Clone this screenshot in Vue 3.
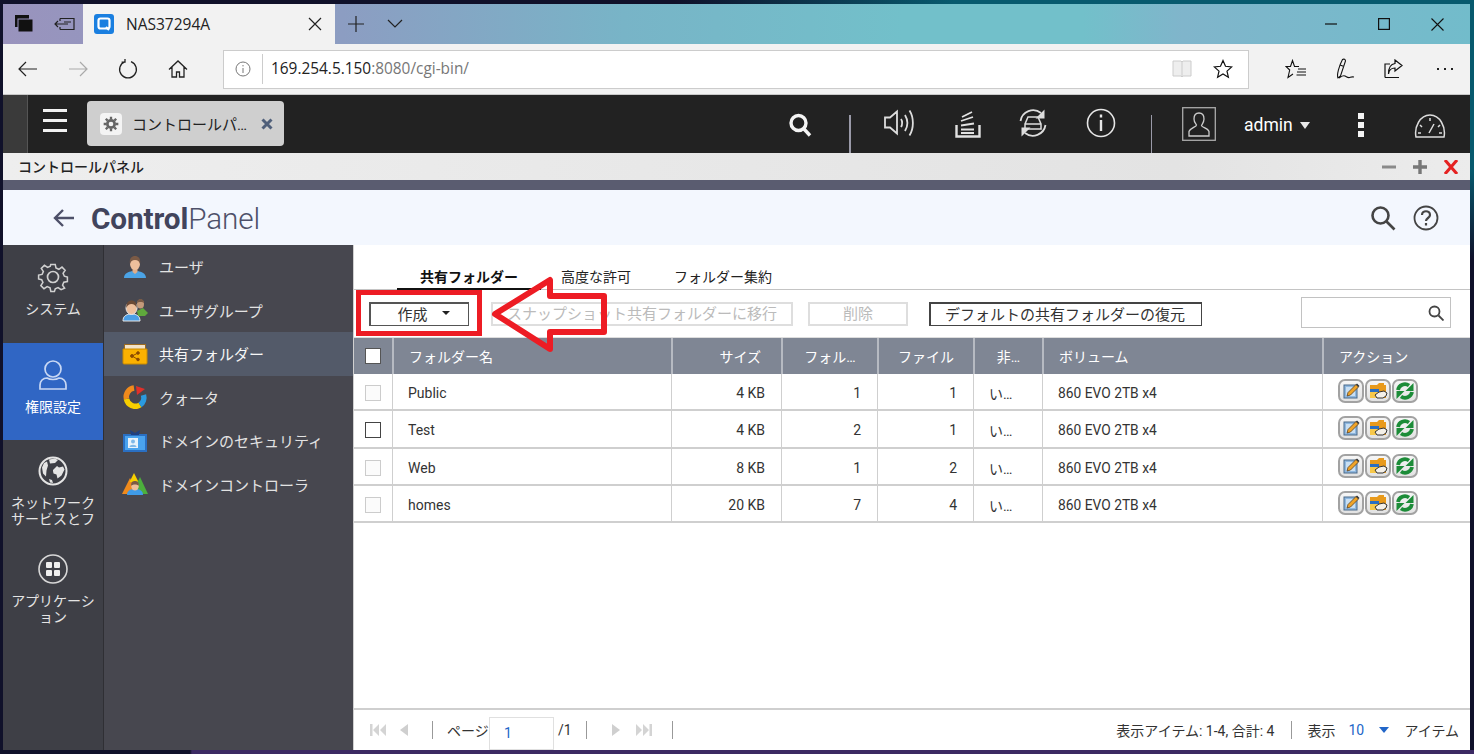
<script setup>
const rows = [
  { name: 'Public', size: '4 KB', folders: 1, files: 1, dark: false, h: 37 },
  { name: 'Test', size: '4 KB', folders: 2, files: 1, dark: true, h: 38 },
  { name: 'Web', size: '8 KB', folders: 1, files: 2, dark: false, h: 37 },
  { name: 'homes', size: '20 KB', folders: 7, files: 4, dark: false, h: 37 }
]
const heads = [
  { t: 'フォルダー名', c: 'left' },
  { t: 'サイズ', c: 'right' },
  { t: 'フォル…', c: 'mid' },
  { t: 'ファイル', c: 'mid' },
  { t: '非…', c: 'mid' },
  { t: 'ボリューム', c: 'left' },
  { t: 'アクション', c: 'left' }
]
</script>

<template>
  <div class="screen">
    <div class="window">
      <!-- browser title bar -->
      <div class="titlebar">
        <div class="tb-tools">
          <svg width="20" height="20" viewBox="0 0 20 20"><rect x="1" y="1" width="14" height="12" fill="#111"/><rect x="4" y="5" width="15" height="13" fill="#111" stroke="#9a93bf" stroke-width="1"/></svg>
          <svg width="22" height="16" viewBox="0 0 22 16" fill="none" stroke="#222" stroke-width="1.2"><path d="M6 2.5h14v11H6M6 2.5V5M6 13.5V11M1 8h13M4 5 1 8l3 3M10 6h7"/></svg>
        </div>
        <div class="tab">
          <svg width="20" height="20" viewBox="0 0 20 20"><rect width="20" height="20" rx="3" fill="#1a7fe0"/><rect x="4.5" y="4.5" width="11" height="10" rx="2" fill="none" stroke="#fff" stroke-width="2.2"/><path d="M12 13l3 3" stroke="#fff" stroke-width="2"/></svg>
          <span class="tab-title">NAS37294A</span>
          <svg class="tab-x" width="14" height="14" viewBox="0 0 14 14" stroke="#222" stroke-width="1.2"><path d="M1 1l12 12M13 1 1 13"/></svg>
        </div>
        <svg class="plus" width="18" height="18" viewBox="0 0 18 18" stroke="#222" stroke-width="1.2"><path d="M9 1v16M1 9h16"/></svg>
        <svg class="chev" width="16" height="10" viewBox="0 0 16 10" fill="none" stroke="#222" stroke-width="1.2"><path d="M1 1l7 7 7-7"/></svg>
        <div class="win-ctrl">
          <svg width="12" height="12" viewBox="0 0 12 12" stroke="#111" stroke-width="1.2"><path d="M0 6h12"/></svg>
          <svg width="12" height="12" viewBox="0 0 12 12" fill="none" stroke="#111" stroke-width="1.2"><rect x=".6" y=".6" width="10.8" height="10.8"/></svg>
          <svg width="13" height="13" viewBox="0 0 13 13" stroke="#111" stroke-width="1.1"><path d="M.5.5l12 12M12.5.5l-12 12"/></svg>
        </div>
      </div>

      <!-- browser nav row -->
      <div class="navrow">
        <div class="nav-left">
          <svg width="20" height="16" viewBox="0 0 20 16" fill="none" stroke="#222" stroke-width="1.2"><path d="M19 8H1M8 1 1 8l7 7"/></svg>
          <svg width="20" height="16" viewBox="0 0 20 16" fill="none" stroke="#aaa" stroke-width="1.2"><path d="M1 8h18M12 1l7 7-7 7"/></svg>
          <svg width="20" height="20" viewBox="0 0 20 20" fill="none" stroke="#222" stroke-width="1.3"><path d="M7 2.6A8.4 8.4 0 1 0 13 2.6M7 0v3.2H3.6"/></svg>
          <svg width="20" height="18" viewBox="0 0 20 18" fill="none" stroke="#222" stroke-width="1.3"><path d="M1 9.5 10 1l9 8.5M4 7v10h4.5v-5h3v5H16V7"/></svg>
        </div>
        <div class="addr">
          <svg class="addr-i" width="16" height="16" viewBox="0 0 16 16" fill="none" stroke="#777"><circle cx="8" cy="8" r="7"/><path d="M8 7v5M8 4v1.4"/></svg>
          <span class="addr-text"><b>169.254.5.150</b>:8080/cgi-bin/</span>
          <svg class="addr-book" width="20" height="18" viewBox="0 0 20 18" fill="#eee" stroke="#ccc"><path d="M1 1h8l1 1 1-1h8v15h-8l-1 1-1-1H1zM10 2v14"/></svg>
          <svg class="addr-star" width="20" height="20" viewBox="0 0 20 20" fill="none" stroke="#111" stroke-width="1.2"><path d="M10 1.500l2.500 5.800 6.200.6-4.700 4.200 1.400 6.200L10 15l-5.400 3.300 1.400-6.200L1.300 7.900l6.200-.6z"/></svg>
        </div>
        <div class="nav-right">
          <svg width="22" height="20" viewBox="0 0 22 20" fill="none" stroke="#111" stroke-width="1.100"><path d="M14 7.500H9.500L7.500 1.500 5.500 7.500H1l3.700 3.500L3 18.500l5-3.500M13 10h8M12 13h9M11.500 16h9.500"/></svg>
          <svg width="20" height="22" viewBox="0 0 20 22" fill="none" stroke="#111" stroke-width="1.100"><path d="M3 20C1.500 17 4 8 7.500 1.500c1.500-1 3 0 3 1.500L5.500 18zM5 7l4 1.500M4 20c3-2 4-3 6-2s3 2 4.500 1.500 2-1 4.500-.5"/></svg>
          <svg width="20" height="20" viewBox="0 0 20 20" fill="none" stroke="#111" stroke-width="1.200"><path d="M2 18.500h14M2 18.500V5h5M12 1l7 5.500-7 5.500V9C8 9 6 11 5.500 15c0-6 2.500-10 6.500-10.500z"/></svg>
          <span class="dots"><i></i><i></i><i></i></span>
        </div>
      </div>

      <!-- NAS top bar -->
      <div class="nasbar">
        <div class="nas-grip"></div>
        <div class="burger"><i></i><i></i><i></i></div>
        <div class="nas-tab">
          <span class="gear-box">
            <svg width="16" height="16" viewBox="0 0 24 24" fill="none" stroke="#666" stroke-width="4"><circle cx="12" cy="12" r="5.500"/><path stroke-width="3.500" d="M12 1v4M12 19v4M1 12h4M19 12h4M4.200 4.200 7 7M17 17l2.800 2.800M4.200 19.800 7 17M17 7l2.800-2.800"/></svg>
          </span>
          <span class="nas-tab-t">コントロールパ…</span>
          <svg width="12" height="12" viewBox="0 0 12 12" stroke="#4f5f7a" stroke-width="3"><path d="M1.500 1.500l9 9M10.500 1.500l-9 9"/></svg>
        </div>
        <div class="nas-right">
          <svg class="n-search" width="24" height="24" viewBox="0 0 24 24" fill="none" stroke="#f4f4f4" stroke-width="3.400"><circle cx="10.500" cy="10" r="7.500"/><path d="M16 16l6 6.500"/></svg>
          <span class="vsep v1"></span>
          <svg class="n-speak" width="32" height="28" viewBox="0 0 32 28" fill="none" stroke="#ddd" stroke-width="1.800"><path d="M1 8.500h5l7-6v22l-7-6H1zM17 10c1.500 2 1.500 6 0 8M21 6c3 5 3 11 0 16M25.500 1.500c4.500 7 4.500 18 0 25"/></svg>
          <svg class="n-stack" width="26" height="28" viewBox="0 0 26 28" fill="none" stroke="#e2e2e2" stroke-width="1.800"><path stroke-width="2.400" d="M1.500 15v11.500h23V15"/><path d="M6 23h13M6 19.500h13M6 15.500l13-2M6 11l12-4M7 7l10-5"/></svg>
          <svg class="n-sync" width="30" height="30" viewBox="0 0 30 30" fill="none" stroke="#ddd" stroke-width="1.800"><path d="M2.500 13A12.800 12.800 0 0 1 23 5M27.500 17A12.800 12.800 0 0 1 7 25"/><path fill="#ddd" stroke="none" d="M26.500 1.500v9h-9zM3.500 28.500v-9h9z"/><path stroke-width="1.500" d="M10 9h10l3 7v5H7v-5zM7 16h16"/></svg>
          <svg class="n-info" width="30" height="30" viewBox="0 0 30 30" fill="none" stroke="#e6e6e6" stroke-width="1.600"><circle cx="15" cy="15" r="13.500"/><path stroke-width="2.400" d="M15 12v11M15 6.500v3"/></svg>
          <span class="vsep v2"></span>
          <svg class="userbox" width="34" height="34" viewBox="0 0 34 34" fill="none" stroke="#ccc" stroke-width="1.300"><rect x=".7" y=".7" width="32.600" height="32.600" stroke="#aaa"/><path d="M17 6c3.500 0 5 2.500 5 6s-2 5-2.500 6.500c0 2 6.500 2.500 7.500 6V29H7v-4.500c1-3.500 7.500-4.500 7.500-6.500C14 16.500 12 15.500 12 12s1.500-6 5-6z"/></svg>
          <span class="admin">admin</span>
          <span class="admin-caret"></span>
          <span class="kebab"><i></i><i></i><i></i></span>
          <svg class="n-gauge" width="32" height="26" viewBox="0 0 32 26" fill="none" stroke="#ddd" stroke-width="1.500"><path d="M2 24h28c2-10-4-22-14-22S0 14 2 24zM16 5v3M6 12l2 2M26 12l-2 2M4 20h3M25 20h3M15 20l5-9"/></svg>
        </div>
      </div>

      <!-- app window bar -->
      <div class="appbar">
        <span class="appbar-t">コントロールパネル</span>
        <div class="appbar-ctl">
          <svg width="14" height="14" viewBox="0 0 14 14" stroke="#8a8a8a" stroke-width="3"><path d="M0 7h14"/></svg>
          <svg width="14" height="14" viewBox="0 0 14 14" stroke="#777" stroke-width="3.400"><path d="M0 7h14M7 0v14"/></svg>
          <svg width="14" height="14" viewBox="0 0 14 14" stroke="#e52222" stroke-width="3"><path d="M1 0l12 14M13 0 1 14"/></svg>
        </div>
      </div>
      <div class="slate"></div>

      <!-- control panel header -->
      <div class="cp-head">
        <svg class="cp-back" width="24" height="20" viewBox="0 0 24 20" fill="none" stroke="#4d5069" stroke-width="2.400"><path d="M22 10H3M11 2l-8 8 8 8"/></svg>
        <span class="cp-title"><b>Control</b>Panel</span>
        <div class="cp-tools">
          <svg width="26" height="26" viewBox="0 0 26 26" fill="none" stroke="#444" stroke-width="2.600"><circle cx="10.500" cy="10.500" r="8"/><path d="M16.500 16.500l8 8"/></svg>
          <svg width="26" height="32" viewBox="0 0 26 26" fill="none" stroke="#444" stroke-width="1.800"><circle cx="13" cy="13" r="11.500"/><path stroke-width="2.200" d="M9 10c0-5 8-5 8 0 0 3-4 3-4 6M13 18v2.500"/></svg>
        </div>
      </div>

      <div class="cp-body">
        <!-- first sidebar -->
        <aside class="side1">
          <div class="s1-item">
            <svg width="32" height="32" viewBox="0 0 32 32" fill="none" stroke="#d0d0d0" stroke-width="1.700"><circle cx="16" cy="16" r="5.500"/><path d="M13.500 2h5l.8 4 3.200 1.400L26 5l3.500 3.500-2.300 3.400 1.400 3.200 3.400.9v5l-4 .8-1.400 3.200 2.300 3.500L25 30l-3.400-2.300-3.100 1.300-.9 3h-4l-.9-3.900-3.200-1.400L6 29l-3.500-3.500 2.300-3.400L3.400 19 0 18.100v-4.200l3.900-.8 1.400-3.200L3 6.500 6.500 3 10 5.300l3-1.300z" transform="translate(1.600 1.600) scale(.9)"/></svg>
            <span>システム</span>
          </div>
          <div class="s1-item active">
            <svg width="30" height="32" viewBox="0 0 30 32" fill="none" stroke="#c9d8f4" stroke-width="1.700"><circle cx="15" cy="10" r="8"/><path d="M2 30v-4c0-4 3-7 7-7 3 2 9 2 12 0 4 0 7 3 7 7v4z"/></svg>
            <span>権限設定</span>
          </div>
          <div class="s1-item">
            <svg width="30" height="30" viewBox="0 0 30 30"><circle cx="15" cy="15" r="13.500" fill="#3d3e45" stroke="#e4e4e4" stroke-width="2"/><path fill="#e4e4e4" d="M11 3.500l6-1 3 1.500-3 3-5 .5zM6 7l3-1.500 1 4-1.500 5-.5 6-3-3-1-6zM15 14l4-4 2 1.500 4-1 1.500 3-3 6-4 3-1-4-3-1-.5-2.500zM11 23l3 1 1 3-3-.5z"/></svg>
            <span>ネットワーク<br>サービスとフ</span>
          </div>
          <div class="s1-item">
            <svg width="30" height="30" viewBox="0 0 30 30"><circle cx="15" cy="15" r="14" fill="none" stroke="#d8d8d8" stroke-width="1.600"/><g fill="#eee"><rect x="8" y="8" width="6" height="6" rx="1"/><rect x="16" y="8" width="6" height="6" rx="1"/><rect x="8" y="16" width="6" height="6" rx="1"/><rect x="16" y="16" width="6" height="6" rx="1"/></g></svg>
            <span>アプリケーション</span>
          </div>
        </aside>

        <!-- second sidebar -->
        <nav class="side2">
          <div class="s2-item">
            <svg width="26" height="24" viewBox="0 0 26 24"><path fill="#4ba3e6" d="M2 23c0-5 5-6 8-7l3 2 3-2c3 1 8 2 8 7z"/><path fill="#e0ad88" d="M10.500 13h5v4l-2.500 2-2.500-2z"/><ellipse cx="13" cy="9" rx="5" ry="6" fill="#eebf9c"/><path fill="#7b5a45" d="M8 9c-1-6 2-8 5-8s6 2 5 8c-1-3-2-4-5-4s-4 1-5 4z"/></svg>
            <span>ユーザ</span>
          </div>
          <div class="s2-item">
            <svg width="26" height="24" viewBox="0 0 26 24"><ellipse cx="18.500" cy="6" rx="3.500" ry="4.500" fill="#c49a7a"/><path fill="#7b5a45" d="M15 5c0-3 2-4 3.500-4S22 2 22 5c-1-1.500-6-1.500-7 0z"/><path fill="#5fa83c" d="M15 13l6-3 5 5-3 3H16z"/><path fill="#4a9ee6" stroke="#e6e6e6" d="M1 23c0-5 3-6 6-7h5c3 1 6 2 6 7z"/><ellipse cx="9.500" cy="10" rx="5.500" ry="6.500" fill="#eebf9c" stroke="#e6e6e6"/><path fill="#6b4a36" d="M4.500 10c-1-5 2-7.500 5-7.500s6 2.500 5 7.500c-1-3-2.500-4-5-4s-4 1-5 4z"/></svg>
            <span>ユーザグループ</span>
          </div>
          <div class="s2-item sel">
            <svg width="26" height="22" viewBox="0 0 26 22"><path fill="#9b6a20" d="M2 1h22v7H2z"/><path fill="#f3e3c8" d="M3 2h20v5H3z"/><path fill="#fbb100" stroke="#c98a00" d="M1 6h24v14a1 1 0 0 1-1 1H2a1 1 0 0 1-1-1z"/><g fill="#8c4a00" stroke="#8c4a00"><circle cx="10" cy="13" r="1.400"/><circle cx="16" cy="10" r="1.300"/><circle cx="16" cy="16.500" r="1.300"/><path d="M10 13l6-3M10 13l6 3.500" fill="none"/></g></svg>
            <span>共有フォルダー</span>
          </div>
          <div class="s2-item">
            <svg width="26" height="24" viewBox="0 0 24 24" fill="none" stroke-width="5.500"><path stroke="#f08a1c" d="M3.500 14A9 9 0 0 1 11 3"/><path stroke="#f7cf00" d="M3.500 14A9 9 0 0 0 17 20"/><path stroke="#2a9adf" d="M17 20A9 9 0 0 0 20.500 10"/><path fill="#e0302a" stroke="none" d="M13 1l1 9 8-6z"/></svg>
            <span>クォータ</span>
          </div>
          <div class="s2-item">
            <svg width="26" height="24" viewBox="0 0 24 24"><rect y="5" width="24" height="18" fill="#2a6fc2"/><rect x="2" y="7" width="20" height="14" fill="#4aa3ee"/><path fill="#1f3f80" d="M8 6 7 1l5 3 5-3-1 5z"/><rect x="5" y="9" width="10" height="10" fill="#e8f2fb"/><circle cx="10" cy="12.500" r="2" fill="#7fb8e8"/><path fill="#7fb8e8" d="M6.500 18c0-3 7-3 7 0z"/></svg>
            <span>ドメインのセキュリティ</span>
          </div>
          <div class="s2-item">
            <svg width="26" height="24" viewBox="0 0 26 24"><path fill="#f08a1c" d="M8 6 16 22H0z"/><path fill="#f7cf00" d="M12 1l4.500 9h-9z"/><path fill="#4caf3c" d="M18 5l8 17H10z"/><path fill="#3f9be8" d="M5 23c0-5 4-6 8-6s8 1 8 6z"/><ellipse cx="13" cy="14" rx="3.800" ry="4.500" fill="#eebf9c"/><path fill="#7b5a45" d="M9.200 14c-.5-4 1.500-5 3.800-5s4.300 1 3.800 5c-1-2-6.600-2-7.600 0z"/></svg>
            <span>ドメインコントローラ</span>
          </div>
        </nav>

        <!-- main -->
        <main class="main">
          <div class="tabs">
            <span class="t-item on">共有フォルダー</span>
            <span class="t-item">高度な許可</span>
            <span class="t-item">フォルダー集約</span>
          </div>
          <div class="toolbar">
            <button class="btn create">作成<i class="caret"></i></button>
            <button class="btn dis snap">スナップショット共有フォルダーに移行</button>
            <button class="btn dis del">削除</button>
            <button class="btn restore">デフォルトの共有フォルダーの復元</button>
            <div class="search">
              <svg width="16" height="16" viewBox="0 0 16 16" fill="none" stroke="#444" stroke-width="1.800"><circle cx="6.500" cy="6.500" r="5"/><path d="M10.500 10.500l5 5"/></svg>
            </div>
          </div>

          <div class="thead">
            <div class="th chk"><span class="hcb"></span></div>
            <div v-for="h in heads" :key="h.t" class="th" :class="h.c">{{ h.t }}</div>
          </div>
          <div v-for="r in rows" :key="r.name" class="trow" :style="{ height: r.h + 'px' }">
            <div class="td chk"><span class="cb" :class="{ dark: r.dark }"></span></div>
            <div class="td left nm">{{ r.name }}</div>
            <div class="td right">{{ r.size }}</div>
            <div class="td right">{{ r.folders }}</div>
            <div class="td right">{{ r.files }}</div>
            <div class="td left hid">い…</div>
            <div class="td left vol">860 EVO 2TB x4</div>
            <div class="td acts">
              <span class="act">
                <svg width="18" height="18" viewBox="0 0 18 18"><rect x="2" y="3" width="13" height="13" fill="#8fb8e0" stroke="#4a6a8a"/><rect x="4" y="5" width="9" height="9" fill="#c9dff2"/><path d="M5 14l1-3.500L14 2.500l2.500 2.500-8 8z" fill="#f0a428" stroke="#5a4020" stroke-width=".8"/><path d="M14 2.500l2.500 2.500 1-1L15 1.500z" fill="#333"/></svg>
              </span>
              <span class="act">
                <svg width="20" height="18" viewBox="0 0 20 18"><path fill="#e89a1c" d="M2 3h7l2-2h5v2h2v13H2z"/><path fill="#2a6fc2" d="M2 7h9v3H2z"/><path fill="#f7c84a" d="M2 10h9v6H2z"/><path fill="#f4f0e8" stroke="#333" stroke-width="1" d="M7 13l4-3 5-1 3 2-1 3-3 2H9z"/></svg>
              </span>
              <span class="act">
                <svg width="20" height="20" viewBox="0 0 20 20" fill="none" stroke="#1c8c38" stroke-width="3.800"><path d="M3 9A7 7 0 0 1 14 4.500"/><path d="M17 11A7 7 0 0 1 6 15.500"/><path fill="#1c8c38" stroke="none" d="M18.500 2v8h-8zM1.500 18v-8h8z"/></svg>
              </span>
            </div>
          </div>

          <div class="spacer"></div>

          <div class="pager">
            <svg class="p1" width="16" height="12" viewBox="0 0 16 12" fill="#d4d4d4"><rect width="2.500" height="12"/><path d="M9 0v12L3 6zM16 0v12l-6-6z"/></svg>
            <svg class="p2" width="10" height="12" viewBox="0 0 10 12" fill="#cfcfcf"><path d="M9 0v12L1 6z"/></svg>
            <span class="psep s-a"></span>
            <span class="p-page">ページ</span>
            <span class="p-input">1</span>
            <span class="p-of">/1</span>
            <span class="psep s-b"></span>
            <svg class="p3" width="10" height="12" viewBox="0 0 10 12" fill="#cfcfcf"><path d="M1 0v12l8-6z"/></svg>
            <svg class="p4" width="16" height="12" viewBox="0 0 16 12" fill="#d4d4d4"><rect x="13.500" width="2.500" height="12"/><path d="M0 0v12l6-6zM7 0v12l6-6z"/></svg>
            <span class="psep s-c"></span>
            <div class="p-right">
              <span>表示アイテム: 1-4, 合計: 4</span>
              <span class="psep s-d"></span>
              <span>表示</span>
              <span class="p-ten">10</span>
              <i class="p-caret"></i>
              <span>アイテム</span>
            </div>
          </div>
        </main>
      </div>
    </div>

    <!-- annotation -->
    <svg class="annot" width="1474" height="754" viewBox="0 0 1474 754" fill="none" stroke="#ed1c24">
      <rect x="358.500" y="292.500" width="121" height="41" stroke-width="5"/>
      <path d="M495 314 550 280V296H604V332H550V349Z" stroke-width="6" stroke-linejoin="round"/>
    </svg>
  </div>
</template>

<style>
html, body { margin: 0; padding: 0; background: #13142a; }
</style>

<style scoped>
.screen {
  position: relative;
  width: 1474px;
  height: 754px;
  overflow: hidden;
  box-sizing: border-box;
  padding: 4px 4px 4px 3px;
  background:
    radial-gradient(ellipse 800px 260px at 100% 0, #075a6e 65%, transparent 100%),
    linear-gradient(90deg, transparent 190px, #3c2a63 192px) bottom / 100% 4px no-repeat,
    #10112a;
  font-family: Roboto, "Noto Sans CJK JP", sans-serif;
}
.window { width: 1467px; height: 746px; display: flex; flex-direction: column; overflow: hidden; }

.titlebar {
  height: 40px; flex: none; display: flex; align-items: center;
  background: linear-gradient(90deg, #9993bd 0, #8c9dc2 340px, #78b4c7 620px, #72c0ca 900px, #72c0ca 1080px, #80b5cb 1180px, #72bccb 1467px);
}
.tb-tools { width: 80px; display: flex; align-items: center; gap: 20px; padding-left: 11px; box-sizing: border-box; }
.tab {
  width: 252px; height: 40px; background: #f2f2f2; display: flex; align-items: center;
  padding-left: 11px; box-sizing: border-box;
}
.tab-title { margin-left: 12px; font-family: "Open Sans", sans-serif; font-size: 15.5px; color: #222; width: 182px; }
.plus { margin-left: 12px; }
.chev { margin-left: 22px; }
.win-ctrl { margin-left: auto; display: flex; gap: 41px; align-items: center; padding-right: 26px; }

.navrow { height: 51px; flex: none; display: flex; align-items: center; background: #f2f2f2; border-bottom: 1px solid #c8c8c8; box-sizing: border-box; }
.nav-left { width: 220px; display: flex; align-items: center; padding-left: 15px; box-sizing: border-box; gap: 30px; }
.addr {
  width: 1026px; height: 39px; box-sizing: border-box; background: #fff; border: 1px solid #ccc; display: flex; align-items: center;
  flex: none;
}
.addr-i { margin-left: 11px; }
.addr-text { margin-left: 11px; padding-left: 8px; border-left: 1px solid #ccc; line-height: 30px; font-family: "Open Sans", sans-serif; font-size: 15.4px; color: #777; }
.addr-text b { font-weight: 400; color: #222; }
.addr-book { margin-left: auto; }
.addr-star { margin-left: 21px; margin-right: 15px; }
.nav-right { flex: 1; display: flex; align-items: center; gap: 28px; padding-left: 36px; box-sizing: border-box; }
.dots { display: flex; gap: 5px; margin-left: 6px; }
.dots i { display: block; width: 2px; height: 2px; background: #222; }

.nasbar { height: 58px; flex: none; background: #222; display: flex; align-items: center; }
.nas-grip { width: 25px; height: 58px; background: #3a3a3a; border-right: 1px solid #555; box-sizing: border-box; }
.burger { margin-left: 15px; width: 24px; display: flex; flex-direction: column; gap: 7px; margin-top: -7px; }
.burger i { display: block; height: 3px; background: #f2f2f2; }
.nas-tab {
  margin-left: 20px; margin-top: -1px; width: 197px; height: 45px; background: #cfcfcf; border-radius: 4px; display: flex; align-items: center;
  box-sizing: border-box; padding-left: 13px;
}
.gear-box { width: 22px; height: 22px; background: #f4f4f4; border-radius: 4px; display: flex; align-items: center; justify-content: center; }
.nas-tab-t { margin-left: 10px; font-size: 15px; color: #222; width: 129px; white-space: nowrap; overflow: hidden; }
.nas-right { position: relative; flex: 1; height: 58px; }
.nas-right > * { position: absolute; }
.n-search { left: 504px; top: 18px; }
.vsep { width: 1px; background: #9a9aa8; height: 38px; top: 20px; }
.v1 { left: 565px; width: 2px; }
.n-speak { left: 600px; top: 14px; }
.n-stack { left: 671px; top: 15px; }
.n-sync { left: 734px; top: 13px; }
.n-info { left: 802px; top: 13px; }
.v2 { left: 867px; }
.userbox { left: 898px; top: 12px; }
.admin { left: 960px; top: 19px; color: #fff; font-size: 17.5px; line-height: 22px; }
.admin-caret { left: 1016px; top: 27px; width: 0; height: 0; border: 5px solid transparent; border-top: 7px solid #e8e8e8; border-bottom: 0; }
.kebab { left: 1074px; top: 18px; display: flex; flex-direction: column; gap: 3px; }
.kebab i { display: block; width: 6px; height: 6px; background: #f4f4f4; }
.n-gauge { left: 1130px; top: 18px; }

.appbar { height: 27px; flex: none; background: linear-gradient(90deg, #eee, #e3e3e3 80%, #ececec); display: flex; align-items: center; }
.appbar-t { margin-left: 15px; font-size: 14px; color: #222; font-weight: 500; margin-top: -2px; }
.appbar-ctl { margin-left: auto; display: flex; gap: 17px; padding-right: 12px; }
.slate { height: 10px; flex: none; background: #5a5c70; }

.cp-head { height: 55px; flex: none; background: #f3f7fe; display: flex; align-items: center; }
.cp-back { margin-left: 49px; }
.cp-title { margin-left: 15px; margin-top: 2px; font-family: Roboto, sans-serif; font-size: 29.7px; font-weight: 300; letter-spacing: -.1px; color: #4d5069; }
.cp-title b { font-weight: 700; color: #41445c; }
.cp-tools { margin-left: auto; display: flex; gap: 17px; align-items: center; padding-right: 31px; }

.cp-body { flex: 1; display: flex; min-height: 0; background: #fff; }
.side1 { width: 101px; flex: none; background: #3e3f46; border-right: 1px solid #2f2f34; box-sizing: border-box; }
.s1-item { height: 97.500px; display: flex; flex-direction: column; align-items: center; padding-top: 16px; box-sizing: border-box; color: #e4e4e4; font-size: 14px; line-height: 16px; text-align: center; gap: 8px; }
.s1-item:nth-child(n+3) { gap: 9px; }
.s1-item span { display: block; padding: 0 8px; }
.s1-item.active { background: #3066c4; color: #fff; }
.side2 { width: 249px; flex: none; background: #47474f; box-sizing: border-box; }
.s2-item { height: 43.500px; display: flex; align-items: center; padding-left: 18px; color: #e2e2e2; font-size: 15px; }
.s2-item svg { flex: none; }
.s2-item span { margin-left: 11px; }
.s2-item.sel { background: #535a69; color: #f6f6f6; }

.main { flex: 1; min-width: 0; display: flex; flex-direction: column; background: #fff; border-left: 1px solid #d0d0d0; }
.tabs { height: 45px; flex: none; box-sizing: border-box; padding-left: 43px; display: flex; align-items: flex-end; border-bottom: 1px solid #c4c4c4; font-size: 14px; color: #222; }
.t-item { height: 27px; line-height: 30px; margin-right: 43px; }
.t-item.on { font-weight: 700; color: #111; border-bottom: 2px solid #111; padding: 0 23px; margin-right: 20px; height: 28px; margin-bottom: -1px; box-sizing: border-box; }
.toolbar { height: 48px; flex: none; display: flex; align-items: center; font-size: 15px; border-bottom: 1px solid #ddd; box-sizing: border-box; }
.btn { height: 24px; box-sizing: border-box; padding: 0 0 2px; background: #fff; border: 1px solid #333; font: inherit; font-size: 15px; color: #333; display: flex; align-items: center; justify-content: center; white-space: nowrap; }
.create { width: 100px; margin-left: 15px; border-width: 2px 1px 1px 2px; border-color: #555; padding-left: 8px; }
.caret { width: 0; height: 0; border: 4px solid transparent; border-top: 4px solid #222; border-bottom: 0; margin-left: 14px; }
.dis { border: 2px solid #dedede; color: #bbb; }
.snap { width: 302px; margin-left: 22px; }
.del { width: 100px; margin-left: 15px; }
.restore { width: 273px; margin-left: 21px; padding-right: 2px; border-width: 2px 1px 1px 2px; border-color: #444; }
.search { margin-left: auto; margin-right: 19px; width: 150px; height: 31px; box-sizing: border-box; border: 1px solid #c2c2c2; display: flex; align-items: center; justify-content: flex-end; padding-right: 6px; margin-top: -2px; }

.thead, .trow { display: grid; grid-template-columns: 38px 279px 110px 96px 96px 69px 280px 1fr; }
.thead { height: 36px; flex: none; background: #7f8694; color: #fff; font-size: 14px; }
.th { display: flex; align-items: center; border-left: 2px solid #b6bac2; box-sizing: border-box; }
.th.chk { border-left: 0; justify-content: center; }
.th.left { padding-left: 15px; }
.th.right { justify-content: flex-end; padding-right: 20px; }
.th.mid { justify-content: center; }
.hcb { width: 14px; height: 14px; background: #fff; border: 1px solid #555; display: block; }
.trow { flex: none; box-sizing: border-box; border-bottom: 2px solid #cfcfcf; color: #333; font-size: 14px; }
.td { display: flex; align-items: center; border-left: 1px solid #cfcfcf; box-sizing: border-box; padding-top: 2px; }
.td.chk { border-left: 0; justify-content: center; }
.td.left { padding-left: 15px; }
.td.right { justify-content: flex-end; padding-right: 16px; }
.td.vol { font-size: 13.800px; }
.cb { width: 14px; height: 14px; border: 1px solid #ccc; background: #fbfbfb; display: block; }
.cb.dark { border-color: #444; background: #fff; }
.acts { padding-left: 15px; gap: 1px; align-items: flex-start; padding-top: 5px; }
.act { width: 26px; height: 24px; box-sizing: border-box; border: 2px solid #a2a2a2; border-radius: 7px; background: linear-gradient(#f6f6f6, #e2e2e2); display: flex; align-items: center; justify-content: center; }
.spacer { flex: 1; }
.pager { height: 42px; flex: none; display: flex; align-items: center; border-top: 2px solid #cfcfcf; box-sizing: border-box; font-size: 14px; color: #333; }
.p1 { margin-left: 16px; }
.p2 { margin-left: 13px; }
.psep { width: 1px; height: 18px; background: #999; display: block; flex: none; }
.s-a { margin-left: 23px; }
.p-page { margin-left: 14px; width: 42px; white-space: nowrap; }
.p-input { width: 65px; height: 33px; box-sizing: border-box; border: 1px solid #e0e0e0; color: #2266c8; padding-left: 14px; line-height: 30px; align-self: flex-end; font-size: 14px; }
.p-of { margin-left: 4px; width: 16px; }
.s-b { margin-left: 12px; }
.p3 { margin-left: 24px; }
.p4 { margin-left: 15px; }
.s-c { margin-left: 20px; }
.p-right { margin-left: auto; padding-right: 11px; display: flex; align-items: center; }
.s-d { margin: 0 15px 0 17px; }
.p-ten { margin-left: 13px; color: #2266c8; font-size: 14px; width: 31px; }
.p-caret { width: 0; height: 0; border: 5px solid transparent; border-top: 6px solid #2266c8; border-bottom: 0; margin-right: 15px; }

.annot { position: absolute; left: 0; top: 0; pointer-events: none; }
</style>
